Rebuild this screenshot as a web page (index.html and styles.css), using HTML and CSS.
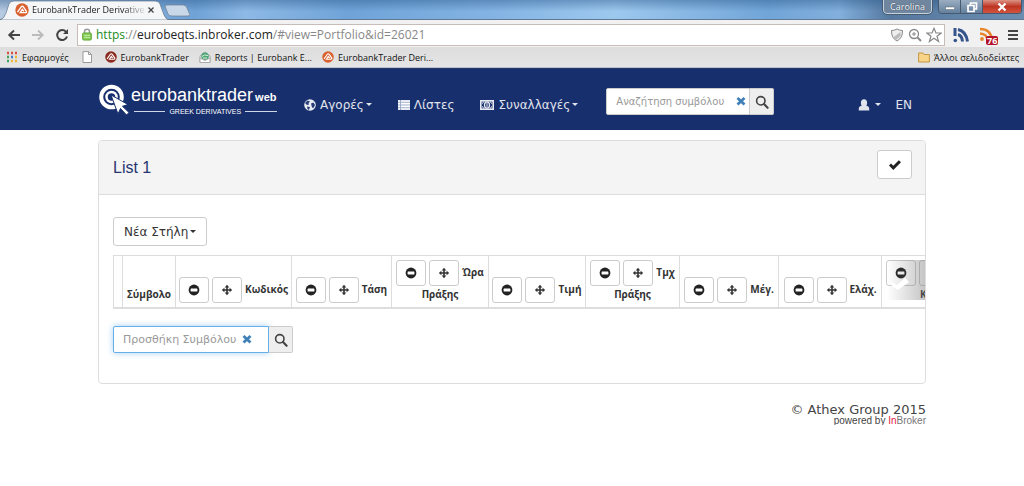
FILE: index.html
```html
<!DOCTYPE html>
<html lang="el">
<head>
<meta charset="utf-8">
<title>EurobankTrader Derivatives</title>
<link rel="stylesheet" href="styles.css">
</head>
<body>
<svg class="sprite" aria-hidden="true">
  <symbol id="minus" viewBox="0 0 12 12"><circle cx="6" cy="6" r="5.4" fill="#222"/><rect x="2.6" y="4.5" width="6.8" height="3" rx=".5" fill="#fff"/></symbol>
  <symbol id="move" viewBox="0 0 12 12"><path d="M6 .8 8.3 3.4H6.8V5.2H8.6V3.7L11.2 6 8.6 8.3V6.8H6.8V8.6H8.3L6 11.2 3.7 8.6H5.2V6.8H3.4V8.3L.8 6 3.4 3.7V5.2H5.2V3.4H3.7Z" fill="#333"/></symbol>
  <symbol id="cross" viewBox="0 0 10 10"><path d="M1.5 2 8.5 8.5M8.5 2 1.5 8.5" stroke="#3f80b8" stroke-width="2.8"/></symbol>
  <symbol id="search" viewBox="0 0 14 14"><circle cx="5.8" cy="5.8" r="4.2" fill="none" stroke="#444" stroke-width="1.6"/><path d="M9 9l3.6 3.8" stroke="#444" stroke-width="2.1" stroke-linecap="round"/></symbol>
  <symbol id="bank" viewBox="0 0 14 14"><circle cx="7" cy="7" r="6.7" fill="currentColor"/><path d="M2.5 9.2 6.2 3.8Q7.3 2.6 8.4 4L11.4 8.3Q11.8 9.6 10.4 9.6H5.2L7.3 6.3 9 8.4" fill="none" stroke="#fff" stroke-width="1.3"/></symbol>
</svg>

<div class="browser">
  <div class="tabstrip">
    <svg class="tab-shape" viewBox="0 0 190 20" aria-hidden="true"><path d="M0 20Q4 19 6 13L9 4Q10 1 14 1H155Q159 1 160 4L164 15Q166 20 170 20Z" fill="#f5f6f7" stroke="#61758c" stroke-width=".7"/><path d="M165 6Q165 5 168 5H183Q186 5 187 8L190 15Q190 16 187 16H172Q169 16 168 14Z" fill="#c9d8e8" stroke="#6d8094" stroke-width=".7"/></svg>
    <div class="tab">
      <svg class="i14 orange"><use href="#bank"/></svg>
      <span class="tab-title">EurobankTrader Derivative</span>
      <button class="tab-close" aria-label="Close tab"><svg viewBox="0 0 8 8"><path d="M1.5 1.5l5 5M6.5 1.5l-5 5" stroke="#444" stroke-width="1.3"/></svg></button>
    </div>
    <div class="window-controls">
      <button class="profile">Carolina</button>
      <div class="window-buttons">
        <button aria-label="Minimize"><svg viewBox="0 0 12 12"><rect x="1.5" y="6" width="9" height="2.5" fill="#fff" stroke="#566" stroke-width=".5"/></svg></button>
        <button aria-label="Restore"><svg viewBox="0 0 12 12"><path d="M4.5 4V2H10.500V8H8.500M2 4.500H8V10.500H2Z" fill="none" stroke="#fff" stroke-width="1.7"/></svg></button>
        <button class="close" aria-label="Close"><svg viewBox="0 0 12 12"><path d="M2.5 2.500l7 7M9.500 2.500l-7 7" stroke="#fff" stroke-width="2.300"/></svg></button>
      </div>
    </div>
  </div>
  <div class="toolbar">
    <button class="plain" aria-label="Back"><svg class="i14" viewBox="0 0 14 14"><path d="M13 7H3M7 2.500 2.300 7 7 11.500" fill="none" stroke="#444" stroke-width="2"/></svg></button>
    <button class="plain" aria-label="Forward"><svg class="i14" viewBox="0 0 14 14"><path d="M1 7H11M7 2.500 11.700 7 7 11.500" fill="none" stroke="#bbb" stroke-width="1.800"/></svg></button>
    <button class="plain" aria-label="Reload"><svg class="i14" viewBox="0 0 14 14"><path d="M11 3.800A5 5 0 1 0 12 8.500" fill="none" stroke="#444" stroke-width="2"/><path d="M13 1V6H8Z" fill="#444"/></svg></button>
    <div class="address">
      <svg class="lock" viewBox="0 0 10 13"><path d="M2.500 6V3.500Q2.500 1.300 5 1.300T7.500 3.500V6" fill="none" stroke="#999" stroke-width="1.500"/><rect x=".7" y="5" width="8.600" height="7" rx="1" fill="#8bcf5c" stroke="#5da533"/><path d="M2 7.500H8M2 9.500H8" stroke="#b9e69a"/></svg>
      <div class="url"><span class="secure">https</span><span class="slashes">://</span><span class="host">eurobeqts.inbroker.com</span>/#view=Portfolio&amp;id=26021</div>
      <svg class="i14" viewBox="0 0 14 14"><path d="M7 1Q9.500 2.500 12.500 2.500 12.800 10 7 13 1.200 10 1.500 2.500 4.500 2.500 7 1Z" fill="#eee" stroke="#888"/><path d="M3 9.500 10.500 4V8L6 12Z" fill="#bbb"/></svg>
      <svg class="i14" viewBox="0 0 14 14"><circle cx="6" cy="6" r="4.500" fill="none" stroke="#888" stroke-width="1.300"/><path d="M9.500 9.500 13 13" stroke="#888" stroke-width="2"/><path d="M4 6H8M6 4V8" stroke="#888"/></svg>
      <svg class="i16" viewBox="0 0 16 16"><path d="M8 1.200 10 6H15.200L11 9.200 12.600 14.500 8 11.300 3.400 14.500 5 9.200 .8 6H6Z" fill="#fff" stroke="#888" stroke-width="1.200"/></svg>
    </div>
    <svg class="i16" viewBox="0 0 16 16"><path d="M2 1V9" stroke="#35548c" stroke-width="3"/><circle cx="2.300" cy="13.500" r="1.800" fill="#35548c"/><path d="M5 2.500Q13 4 14.500 14.500M5 7.500Q9 8.500 9.500 14.500" fill="none" stroke="#35548c" stroke-width="3"/></svg>
    <div class="feed">
      <svg class="i16" viewBox="0 0 16 16"><circle cx="3" cy="12" r="1.900" fill="#e8862c"/><path d="M1 2Q12 2 13 13M1 6.500Q8 7 8.500 13" fill="none" stroke="#e8862c" stroke-width="2.400"/></svg>
      <span class="count">76</span>
    </div>
    <button class="plain" aria-label="Menu"><svg class="i12" viewBox="0 0 12 12"><path d="M1 2H11M1 6H11M1 10H11" stroke="#444" stroke-width="2"/></svg></button>
  </div>
  <nav class="bookmarks" aria-label="Bookmarks">
    <a href="#"><svg class="i12" viewBox="0 0 12 12"><path d="M1 2H3M5 2H7M9 2H11" stroke="#d94f3d" stroke-width="2.400"/><path d="M5 6H7" stroke="#3f78cf" stroke-width="2.400"/><path d="M9 6H11M5 10H7M9 10H11" stroke="#edb92e" stroke-width="2.400"/><path d="M1 10H3M1 6H3" stroke="#42a45a" stroke-width="2.400"/></svg>Εφαρμογές</a>
    <a class="page" href="#" aria-label="Page"><svg class="i12" viewBox="0 0 12 12"><path d="M2 .6H7.500L10.500 3.500V11.500H2Z" fill="#fff" stroke="#999"/><path d="M7.500 .6V3.500H10.500" fill="none" stroke="#999"/></svg></a>
    <a href="#"><svg class="i12 maroon"><use href="#bank"/></svg>EurobankTrader</a>
    <a href="#"><svg class="i12" viewBox="0 0 12 12"><path d="M1 5 6 1 11 5V11.500H1Z" fill="#f8f8f8" stroke="#aaa"/><circle cx="6" cy="5.200" r="3.800" fill="#51a678"/><path d="M3 5.500Q5 3 9 4.500M4 7H8" stroke="#d6f0dd" fill="none"/><path d="M1 7 6 9.500 11 7V11.500H1Z" fill="#fff" stroke="#aaa"/></svg>Reports | Eurobank E...</a>
    <a href="#"><svg class="i12 orange"><use href="#bank"/></svg>EurobankTrader Deri...</a>
    <a class="other" href="#"><svg class="i12" viewBox="0 0 12 12"><path d="M.6 2H5L6 3.500H11.400V11H.6Z" fill="#f7d488" stroke="#c59746"/></svg>Άλλοι σελιδοδείκτες</a>
  </nav>
</div>

<header class="site-header">
  <div class="container header-row">
    <a class="logo" href="#">
      <svg class="logo-mark" viewBox="0 0 32 32"><circle cx="12.500" cy="13" r="10.300" fill="none" stroke="#fff" stroke-width="4"/><circle cx="12.500" cy="13" r="5" fill="none" stroke="#fff" stroke-width="2.500"/><path d="M12 11 29 20.500 23.500 22.300 30 28.500 27.500 31 21.500 24.500 19 30Z" fill="#fff" stroke="#182f6d" stroke-width="1"/></svg>
      <span class="logo-words">
        <span class="logo-main">eurobanktrader<b>web</b></span>
        <span class="logo-sub">GREEK DERIVATIVES</span>
      </span>
    </a>
    <nav class="main-nav">
      <a href="#"><svg class="i12" viewBox="0 0 12 12"><circle cx="6" cy="6" r="5.800" fill="#e8ebf2"/><path d="M3.500 1.500 6 2.500 4.500 4 5 5.500 3 6 1 4ZM7 4.500 9.500 3.500 11 6 9.500 9 8 8.500 7.500 6.500ZM3 7.500 6 8 5 11 3.500 10Z" fill="#273e78"/></svg><span>Αγορές</span><i class="caret"></i></a>
      <a href="#"><svg class="i12" viewBox="0 0 12 12"><path d="M0 1H12V11H0Z" fill="#9dabc9"/><path d="M0 2H2M3 2H12M0 4.700H2M3 4.700H12M0 7.400H2M3 7.400H12M0 10H2M3 10H12" stroke="#fff" stroke-width="1.700"/></svg><span>Λίστες</span></a>
      <a href="#"><svg class="money" viewBox="0 0 14 12"><rect x=".8" y="1.800" width="12.400" height="8.400" fill="none" stroke="#e8ebf2" stroke-width="1.600"/><ellipse cx="7" cy="6" rx="2.500" ry="3.200" fill="none" stroke="#e8ebf2" stroke-width="1.300"/><path d="M7 4V8M2 4.500Q3.500 4 3.500 2.500M12 4.500Q10.500 4 10.500 2.500M2 7.500Q3.500 8 3.500 9.500M12 7.500Q10.500 8 10.500 9.500" fill="none" stroke="#e8ebf2"/></svg><span>Συναλλαγές</span><i class="caret"></i></a>
    </nav>
    <form class="search site-search">
      <input type="text" aria-label="Αναζήτηση συμβόλου" placeholder="Αναζήτηση συμβόλου">
      <button type="reset" class="clear" aria-label="Clear"><svg class="i10"><use href="#cross"/></svg></button>
      <button type="submit" class="go" aria-label="Search"><svg class="i14"><use href="#search"/></svg></button>
    </form>
    <nav class="user-nav">
      <a href="#" aria-label="User"><svg class="i12" viewBox="0 0 12 12"><ellipse cx="6" cy="3.900" rx="3.100" ry="3.700" fill="#e0e4ec"/><path d="M.8 11.500V9Q1 7.300 4 6.500H8Q11 7.300 11.200 9V11.500Z" fill="#e0e4ec"/></svg><i class="caret"></i></a>
      <a href="#">EN</a>
    </nav>
  </div>
</header>

<main class="container">
  <section class="panel">
    <div class="panel-head">
      <h1>List 1</h1>
      <button class="btn confirm" aria-label="OK"><svg class="i14" viewBox="0 0 14 14"><path d="M1 7.500 3 5.500 5.300 7.700 10.800 2.200 13 4.300 5.300 12Z" fill="#222"/></svg></button>
    </div>
    <div class="panel-body">
      <button class="btn new-column">Νέα Στήλη<i class="caret"></i></button>
      <div class="table-clip">
        <table class="quotes">
          <colgroup><col class="c-edge"><col class="c-symbol"><col class="c-code"><col class="c-trend"><col class="c-time"><col class="c-time"><col class="c-qty"><col class="c-high"><col class="c-low"><col class="c-last"></colgroup>
          <thead><tr>
            <th></th>
            <th>Σύμβολο</th>
            <th><button class="btn tool" aria-label="Remove"><svg class="i12"><use href="#minus"/></svg></button><button class="btn tool" aria-label="Move"><svg class="i12"><use href="#move"/></svg></button>Κωδικός</th>
            <th><button class="btn tool" aria-label="Remove"><svg class="i12"><use href="#minus"/></svg></button><button class="btn tool" aria-label="Move"><svg class="i12"><use href="#move"/></svg></button>Τάση</th>
            <th><button class="btn tool" aria-label="Remove"><svg class="i12"><use href="#minus"/></svg></button><button class="btn tool" aria-label="Move"><svg class="i12"><use href="#move"/></svg></button>Ώρα<br>Πράξης</th>
            <th><button class="btn tool" aria-label="Remove"><svg class="i12"><use href="#minus"/></svg></button><button class="btn tool" aria-label="Move"><svg class="i12"><use href="#move"/></svg></button>Τιμή</th>
            <th><button class="btn tool" aria-label="Remove"><svg class="i12"><use href="#minus"/></svg></button><button class="btn tool" aria-label="Move"><svg class="i12"><use href="#move"/></svg></button>Τμχ<br>Πράξης</th>
            <th><button class="btn tool" aria-label="Remove"><svg class="i12"><use href="#minus"/></svg></button><button class="btn tool" aria-label="Move"><svg class="i12"><use href="#move"/></svg></button>Μέγ.</th>
            <th><button class="btn tool" aria-label="Remove"><svg class="i12"><use href="#minus"/></svg></button><button class="btn tool" aria-label="Move"><svg class="i12"><use href="#move"/></svg></button>Ελάχ.</th>
            <th class="last"><button class="btn tool" aria-label="Remove"><svg class="i12"><use href="#minus"/></svg></button><button class="btn tool" aria-label="Move"><svg class="i12"><use href="#move"/></svg></button><br><span>Κ</span></th>
          </tr></thead>
        </table>
        <div class="scroll-hint"><svg viewBox="0 0 24 16"><path d="M4 7 10 10 18 3 22 7 11 15 4 10Z" fill="#fff"/></svg></div>
      </div>
      <form class="search add-symbol">
        <input type="text" aria-label="Προσθήκη Συμβόλου" placeholder="Προσθήκη Συμβόλου" autofocus>
        <button type="reset" class="clear" aria-label="Clear"><svg class="i10"><use href="#cross"/></svg></button>
        <button type="submit" class="go" aria-label="Search"><svg class="i14"><use href="#search"/></svg></button>
      </form>
    </div>
  </section>
  <footer>
    <div class="copyright">© Athex Group 2015</div>
    <div class="powered">powered by <a href="#"><span>In</span>Broker</a></div>
  </footer>
</main>
</body>
</html>
```

FILE: styles.css
```css
* { box-sizing: border-box; }
body { margin: 0; background: #fff; color: #333; font: 12px "DejaVu Sans", sans-serif; }
a { color: inherit; text-decoration: none; }
button, input { font: inherit; color: inherit; margin: 0; }
svg { display: block; flex: none; }
.sprite { position: absolute; width: 0; height: 0; }
.i10 { width: 10px; height: 10px; }
.i12 { width: 12px; height: 12px; }
.i14 { width: 14px; height: 14px; }
.i16 { width: 16px; height: 16px; }
.orange { color: #d9602f; }
.maroon { color: #8b2a20; }
.plain { display: flex; padding: 0; border: 0; background: none; }
.container { max-width: 828px; margin: 0 auto; }
.caret { display: inline-block; border: 3px solid transparent; border-top-color: currentColor; border-bottom: 0; vertical-align: middle; }

/* Browser frame */
.browser { font-family: "Open Sans", "Noto Sans", sans-serif; font-size: 9px; }
.tabstrip { position: relative; display: flex; height: 20px; padding-left: 15px; background: linear-gradient(rgba(35,80,130,.4), transparent 60%), linear-gradient(90deg, #b6cbe2, #6fa2d6 19%, #8db9e5 24%, #6fa3d8 34%, #83b3e3 48%, #9dc8ee 60%, #71a5d8 75%, #82afdc 82%, #54789f 87%, #6b8db0); border-bottom: 1px solid #617895; }
.tab-shape { position: absolute; left: 0; top: 0; width: 190px; height: 20px; }
.tab { position: relative; display: flex; align-items: center; width: 140px; color: #222; }
.tab-title { flex: 1; margin-left: 3px; white-space: nowrap; -webkit-mask-image: linear-gradient(90deg, #000 80%, transparent); mask-image: linear-gradient(90deg, #000 80%, transparent); }
.tab-close { width: 8px; height: 8px; padding: 0; border: 0; background: none; }
.window-controls { display: flex; gap: 6px; margin-left: auto; padding-right: 2px; height: 14px; color: #fff; }
.profile { width: 49px; padding: 0; border: 1px solid #c4d2e0; border-top: 0; border-radius: 0 0 4px 4px; background: #70869f; line-height: 12px; text-shadow: 0 0 1px #123; outline: 1px solid #485b70; }
.window-buttons { display: flex; border: 1px solid #46596e; border-top: 0; border-radius: 0 0 4px 4px; overflow: hidden; }
.window-buttons button { display: flex; align-items: center; justify-content: center; width: 22px; padding: 0; border: 0; border-right: 1px solid #46596e; background: linear-gradient(#9badc1, #64809d); }
.window-buttons svg { width: 12px; height: 12px; }
.window-buttons .close { width: 38px; border-right: 0; background: linear-gradient(#dc9385, #bd3522 50%, #d35440); }
.toolbar { display: flex; align-items: center; gap: 8px; height: 27px; padding: 2px 5px 0 7px; background: #f1f1f1; }
.plain + .plain { margin-left: 2px; }
.address { flex: 1; display: flex; align-items: center; gap: 4px; height: 22px; min-width: 0; padding: 0 2px 0 4px; border: 1px solid #c8bcb9; background: #fff; }
.lock { width: 10px; height: 13px; }
.url { flex: 1; overflow: hidden; color: #888; font: 12px/20px "Open Sans", "Noto Sans", sans-serif; white-space: nowrap; }
.secure { color: #238b23; }
.host { color: #222; }
.feed { position: relative; width: 20px; margin-left: 2px; }
.count { position: absolute; left: 7px; top: 9px; padding: 0 1px; border-radius: 2px; background: #b41227; color: #fff; font-size: 9px; font-weight: bold; line-height: 9px; }
.bookmarks { display: flex; align-items: center; gap: 10px; height: 21px; padding: 0 5px 0 6px; background: linear-gradient(#ddd, #e5e5e5); border-bottom: 1px solid #b9bfd0; color: #111; white-space: nowrap; }
.bookmarks a { display: flex; align-items: center; gap: 4px; }
.bookmarks .page { margin: 0 2px; }
.bookmarks .other { margin-left: auto; }

/* Site header */
.site-header { background: #182f6d; border-top: 1px solid #24386a; color: #e0e4ee; }
.header-row { display: flex; align-items: center; height: 61px; }
.logo { display: flex; align-items: center; width: 178px; color: #fff; }
.logo-mark { width: 32px; height: 32px; margin-left: 1px; }
.logo-words { flex: 1; font-family: "Liberation Sans", sans-serif; white-space: nowrap; }
.logo-main { display: block; font-size: 18px; line-height: 22px; }
.logo-main b { margin-left: 2px; font-size: 11px; }
.logo-sub { display: flex; align-items: center; gap: 4px; margin-left: 3px; font: 7px/8px "Liberation Sans", sans-serif; }
.logo-sub::before, .logo-sub::after { content: ""; flex: 1; height: 1px; background: #cfd6e5; }
.main-nav, .user-nav { display: flex; gap: 26px; padding-top: 10px; white-space: nowrap; }
.main-nav { margin-left: 28px; }
.main-nav a, .user-nav a { display: flex; align-items: center; line-height: 16px; }
.main-nav svg { margin-right: 4px; }
.main-nav .caret { margin-left: 2px; }
.money { width: 14px; height: 12px; }
.user-nav { gap: 14px; margin-left: auto; padding-right: 14px; }
.user-nav .caret { margin-left: 5px; }

.search { position: relative; display: flex; width: 180px; height: 27px; }
.search input { flex: 1; min-width: 0; padding: 0 28px 0 9px; border: 1px solid #ccc; border-radius: 2px 0 0 2px; background: #fff; font-size: 11px; outline: 0; }
.search input::placeholder { color: #999; opacity: 1; }
.clear { position: absolute; right: 41px; top: 8px; padding: 0; border: 0; background: none; }
.go { display: flex; align-items: center; justify-content: center; width: 24px; padding: 0; border: 1px solid #ccc; border-left: 0; border-radius: 0 2px 2px 0; background: #eee; }
.site-search { width: 168px; margin: 4px 0 0 28px; }
.site-search input { padding-right: 14px; font-size: 10px; }
.site-search .clear { right: 28px; }
.add-symbol input:focus { border-color: #66afe9; box-shadow: 0 0 6px rgba(102,175,233,.6); }

/* Panel */
.panel { margin-top: 10px; border: 1px solid #ddd; border-radius: 4px; }
.panel-head { display: flex; align-items: flex-start; justify-content: space-between; padding: 9px 13px 15px 14px; border-bottom: 1px solid #ddd; border-radius: 3px 3px 0 0; background: #f4f4f4; }
h1 { margin: 8px 0 0; color: #26356f; font: 16px/20px "Liberation Sans", sans-serif; }
.btn { display: inline-flex; align-items: center; justify-content: center; padding: 0; border: 1px solid #ccc; border-radius: 3px; background: #fff; }
.confirm { width: 35px; height: 29px; }
.panel-body { padding: 22px 0 30px 14px; }
.new-column { height: 29px; padding: 0 10px; }
.new-column .caret { margin-left: 2px; }
.table-clip { position: relative; margin-top: 9px; overflow: hidden; }
.quotes { width: 870px; table-layout: fixed; border-collapse: collapse; }
.c-edge { width: 9px; } .c-symbol { width: 53px; } .c-code { width: 116px; }
.c-trend { width: 100px; } .c-time { width: 97px; } .c-qty { width: 94px; }
.c-high { width: 99px; } .c-low { width: 103px; } .c-last { width: 102px; }
th { height: 52px; padding: 4px 0; border: 1px solid #ddd; border-bottom: 2px solid #ddd; color: #333; font: bold 10px/17px "Open Sans", "Noto Sans", sans-serif; vertical-align: bottom; text-align: center; white-space: nowrap; }
.last { padding-left: 4px; text-align: left; }
.last span { margin-left: 34px; }
.tool { width: 30px; height: 26px; margin-right: 3px; vertical-align: middle; }
.scroll-hint { position: absolute; right: 0; top: 5px; display: flex; align-items: flex-end; width: 38px; height: 40px; padding-bottom: 9px; background: linear-gradient(90deg, transparent, rgba(110,110,110,.4)); }
.scroll-hint svg { width: 24px; height: 16px; }
.add-symbol { margin-top: 17px; }

footer { margin-top: 19px; color: #444; text-align: right; }
.copyright { font-size: 13px; line-height: 14px; }
.powered { font: 10px/8px "Liberation Sans", sans-serif; }
.powered a { color: #777; }
.powered a span { color: #e5203f; }
```
